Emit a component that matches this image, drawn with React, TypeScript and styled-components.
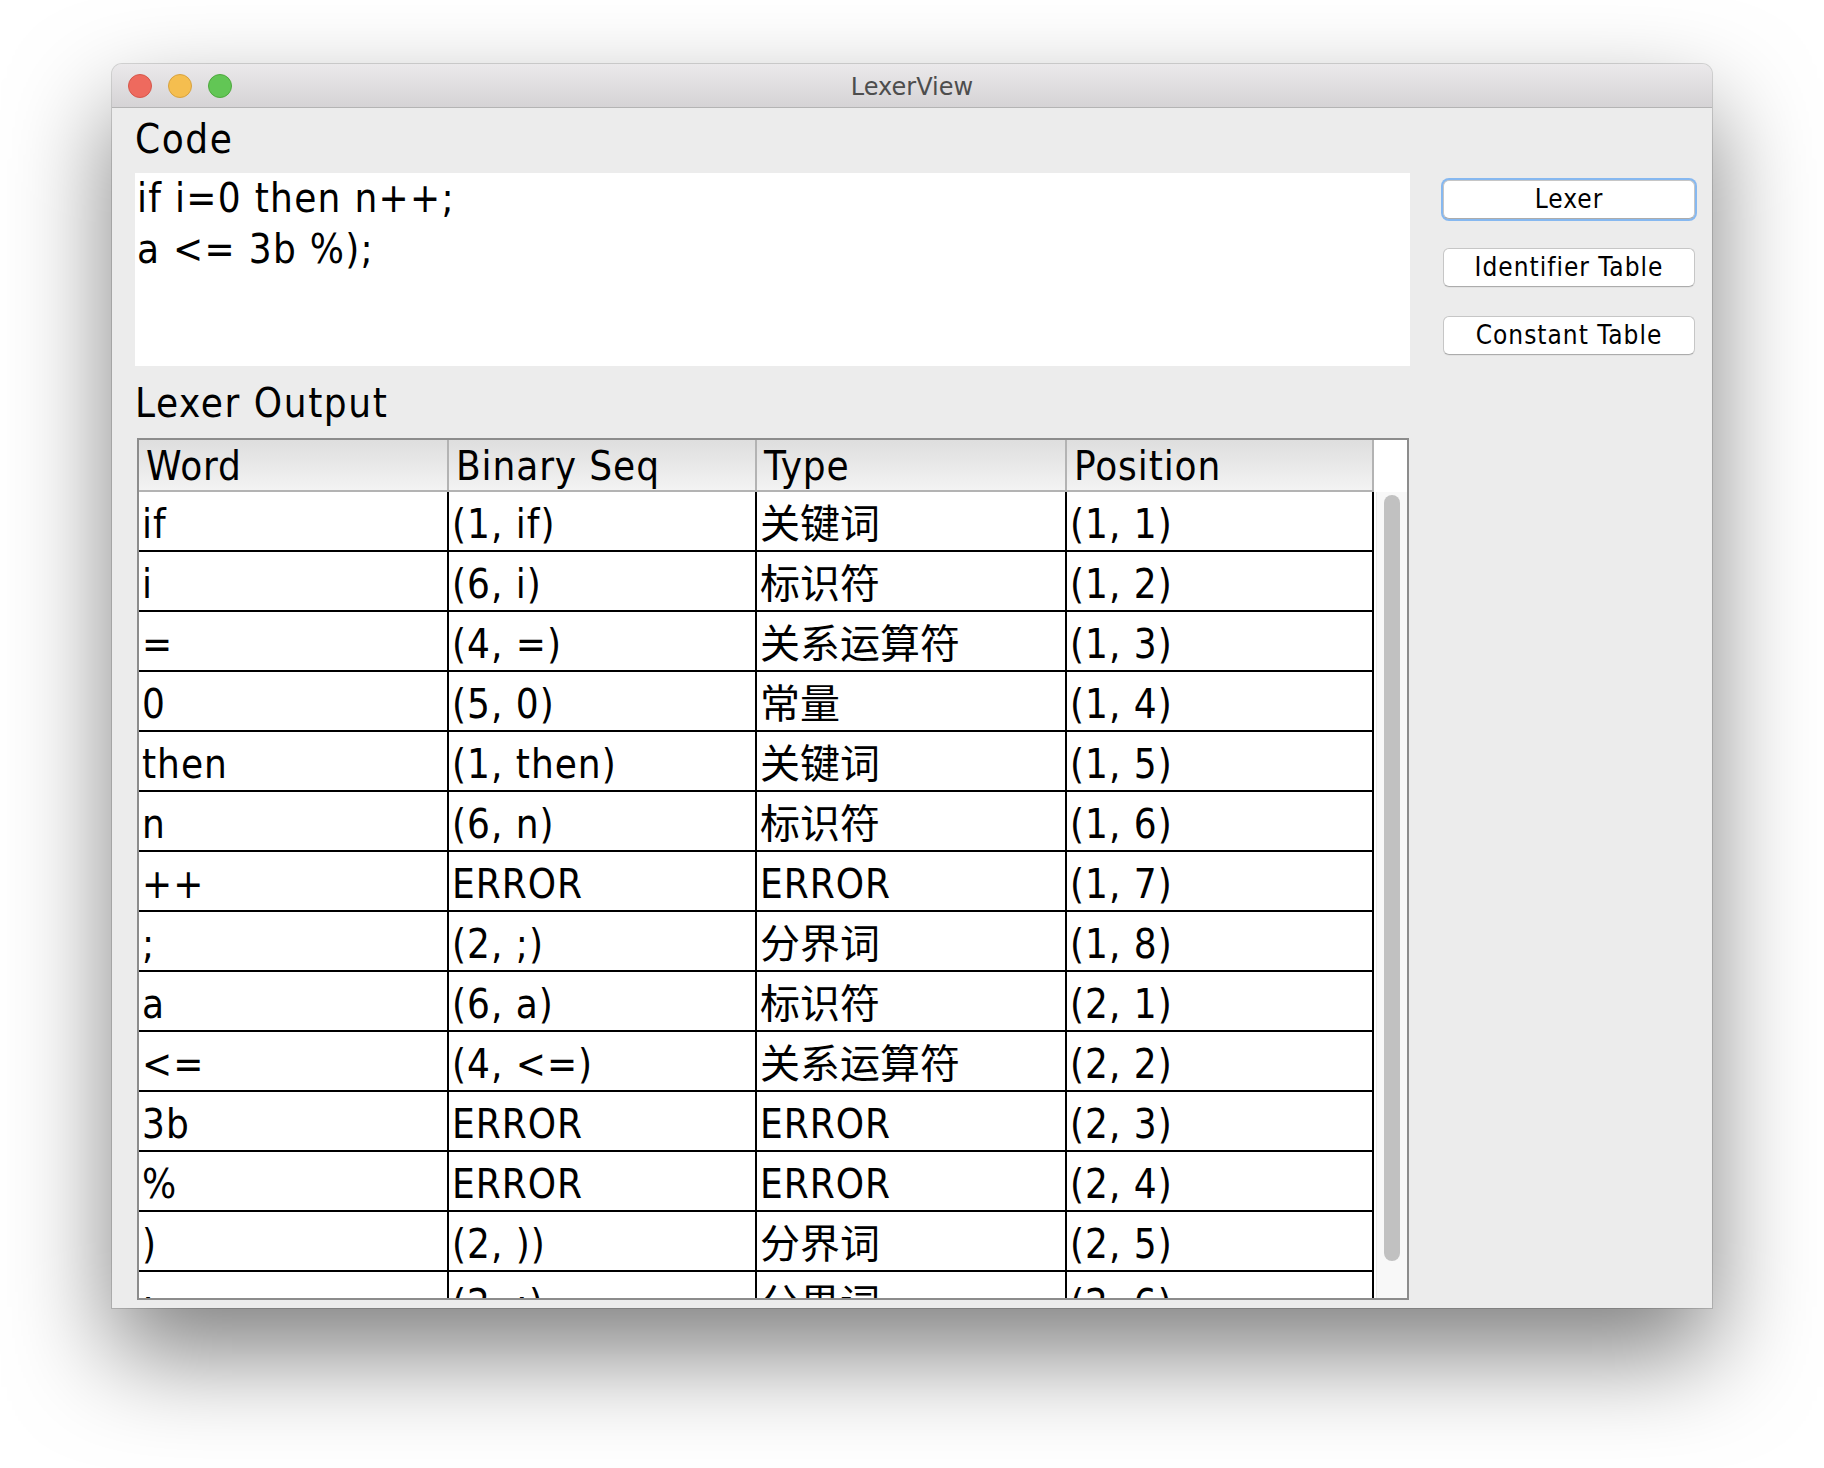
import styled, { createGlobalStyle } from 'styled-components'

const LATIN = `"DejaVu Sans Condensed", "DejaVu Sans", "Noto Sans CJK SC", sans-serif`

const GlobalStyle = createGlobalStyle`
  html, body {
    margin: 0;
    padding: 0;
    background: #ffffff;
  }
  * {
    box-sizing: border-box;
  }
`

const Page = styled.div`
  width: 1824px;
  height: 1468px;
  padding: 64px 0 0 112px;
  overflow: hidden;
  font-family: ${LATIN};
`

const Window = styled.div`
  width: 1600px;
  height: 1244px;
  display: flex;
  flex-direction: column;
  border-radius: 10px 10px 0 0;
  background: #ececec;
  box-shadow: 0 0 0 1px rgba(0, 0, 0, 0.14), 0 46px 100px rgba(0, 0, 0, 0.5);
  overflow: hidden;
`

const TitleBar = styled.div`
  height: 44px;
  flex-shrink: 0;
  display: grid;
  grid-template-columns: 1fr auto 1fr;
  align-items: center;
  padding: 0 16px;
  background: linear-gradient(#ebe9eb, #d5d3d5);
  border-bottom: 1px solid #b4b4b4;
`

const Lights = styled.div`
  display: flex;
  gap: 16px;
`

const Light = styled.span<{ $fill: string; $edge: string }>`
  width: 24px;
  height: 24px;
  border-radius: 50%;
  background: ${({ $fill }) => $fill};
  border: 1px solid ${({ $edge }) => $edge};
`

const Title = styled.div`
  font-family: "DejaVu Sans", sans-serif;
  font-size: 24px;
  color: #4d4d4d;
  padding-top: 2px;
`

const Body = styled.div`
  flex: 1;
  min-height: 0;
  display: flex;
  gap: 33px;
  padding: 0 17px 8px 23px;
`

const LeftCol = styled.div`
  flex: 1;
  min-width: 0;
  display: flex;
  flex-direction: column;
`

const SectionLabel = styled.div<{ $h: number; $pad: number }>`
  height: ${({ $h }) => $h}px;
  padding-top: ${({ $pad }) => $pad}px;
  font-size: 40px;
  letter-spacing: 1.6px;
  line-height: normal;
  color: #000;
`

const CodeArea = styled.textarea`
  display: block;
  height: 193px;
  width: 100%;
  margin: 0;
  padding: 0 2px;
  border: none;
  outline: none;
  resize: none;
  overflow: hidden;
  background: #ffffff;
  color: #000;
  font-family: ${LATIN};
  font-size: 40px;
  letter-spacing: 1.3px;
  line-height: 51px;
`

const Table = styled.div`
  height: 863px;
  margin: 0 1px 0 2px;
  display: flex;
  flex-direction: column;
  border: 2px solid #8c8c8c;
  background: #ffffff;
  overflow: hidden;
`

const COLUMNS = '310px 308px 310px 307px'

const HeaderRow = styled.div`
  display: grid;
  grid-template-columns: ${COLUMNS} 1fr;
  flex-shrink: 0;
`

const HeaderCell = styled.div`
  height: 52px;
  padding: 2px 0 0 7px;
  font-size: 40px;
  letter-spacing: 0.9px;
  line-height: 48px;
  background: linear-gradient(#dedede, #f3f3f3);
  border-right: 2px solid #b3b3b3;
  border-bottom: 2px solid #b3b3b3;
  white-space: nowrap;
`

const HeaderGap = styled.div`
  background: #ffffff;
`

const BodyArea = styled.div`
  flex: 1;
  min-height: 0;
  display: flex;
`

const Rows = styled.div`
  width: 1235px;
  flex-shrink: 0;
  overflow: hidden;
`

const Row = styled.div`
  display: grid;
  grid-template-columns: ${COLUMNS};
  height: 60px;
`

const Cell = styled.div<{ $cjk?: boolean }>`
  padding: 6px 0 0 3px;
  font-size: 40px;
  letter-spacing: ${({ $cjk }) => ($cjk ? '0' : '1px')};
  line-height: 52px;
  border-right: 2px solid #000;
  border-bottom: 2px solid #000;
  white-space: nowrap;
  overflow: hidden;
`

const ScrollTrack = styled.div`
  flex: 1;
  padding: 3px 6px 37px 7px;
  margin-left: 2px;
  background: #f8f8f8;
  border-left: 1px solid #ebebeb;
`

const ScrollThumb = styled.div`
  width: 16px;
  height: 100%;
  border-radius: 8px;
  background: #c1c1c1;
`

const RightCol = styled.div`
  width: 252px;
  flex-shrink: 0;
  display: flex;
  flex-direction: column;
  gap: 29px;
  padding-top: 72px;
`

const Button = styled.button<{ $focused?: boolean }>`
  height: 39px;
  width: 100%;
  padding: 0;
  border-radius: 6px;
  background: #ffffff;
  border: 1px solid #c6c6c6;
  border-bottom-color: #acacac;
  font-family: ${LATIN};
  font-size: 26px;
  letter-spacing: 1px;
  line-height: 37px;
  color: #000;
  box-shadow: ${({ $focused }) =>
    $focused ? '0 0 0 2px #86b8f0' : '0 1px 0 rgba(0, 0, 0, 0.04)'};
`

const rows: [string, string, string, string][] = [
  ['if', '(1, if)', '关键词', '(1, 1)'],
  ['i', '(6, i)', '标识符', '(1, 2)'],
  ['=', '(4, =)', '关系运算符', '(1, 3)'],
  ['0', '(5, 0)', '常量', '(1, 4)'],
  ['then', '(1, then)', '关键词', '(1, 5)'],
  ['n', '(6, n)', '标识符', '(1, 6)'],
  ['++', 'ERROR', 'ERROR', '(1, 7)'],
  [';', '(2, ;)', '分界词', '(1, 8)'],
  ['a', '(6, a)', '标识符', '(2, 1)'],
  ['<=', '(4, <=)', '关系运算符', '(2, 2)'],
  ['3b', 'ERROR', 'ERROR', '(2, 3)'],
  ['%', 'ERROR', 'ERROR', '(2, 4)'],
  [')', '(2, ))', '分界词', '(2, 5)'],
  [';', '(2, ;)', '分界词', '(2, 6)'],
]

const headers = ['Word', 'Binary Seq', 'Type', 'Position']

const isCjk = (s: string) => /[\u4e00-\u9fff]/.test(s)

export default function App() {
  return (
    <Page>
      <GlobalStyle />
      <Window>
        <TitleBar>
          <Lights>
            <Light $fill="#ee6a5e" $edge="#d5574b" />
            <Light $fill="#f5be4f" $edge="#d7a23f" />
            <Light $fill="#62c655" $edge="#4ea83e" />
          </Lights>
          <Title>LexerView</Title>
          <div />
        </TitleBar>

        <Body>
          <LeftCol>
            <SectionLabel $h={65} $pad={8}>Code</SectionLabel>
            <CodeArea readOnly spellCheck={false} defaultValue={'if i=0 then n++;\na <= 3b %);'} />

            <SectionLabel $h={72} $pad={14}>Lexer Output</SectionLabel>
            <Table>
              <HeaderRow>
                {headers.map((h) => (
                  <HeaderCell key={h}>{h}</HeaderCell>
                ))}
                <HeaderGap />
              </HeaderRow>
              <BodyArea>
                <Rows>
                  {rows.map((r, i) => (
                    <Row key={i}>
                      {r.map((c, j) => (
                        <Cell key={j} $cjk={isCjk(c)}>{c}</Cell>
                      ))}
                    </Row>
                  ))}
                </Rows>
                <ScrollTrack>
                  <ScrollThumb />
                </ScrollTrack>
              </BodyArea>
            </Table>
          </LeftCol>

          <RightCol>
            <Button $focused>Lexer</Button>
            <Button>Identifier Table</Button>
            <Button>Constant Table</Button>
          </RightCol>
        </Body>
      </Window>
    </Page>
  )
}
